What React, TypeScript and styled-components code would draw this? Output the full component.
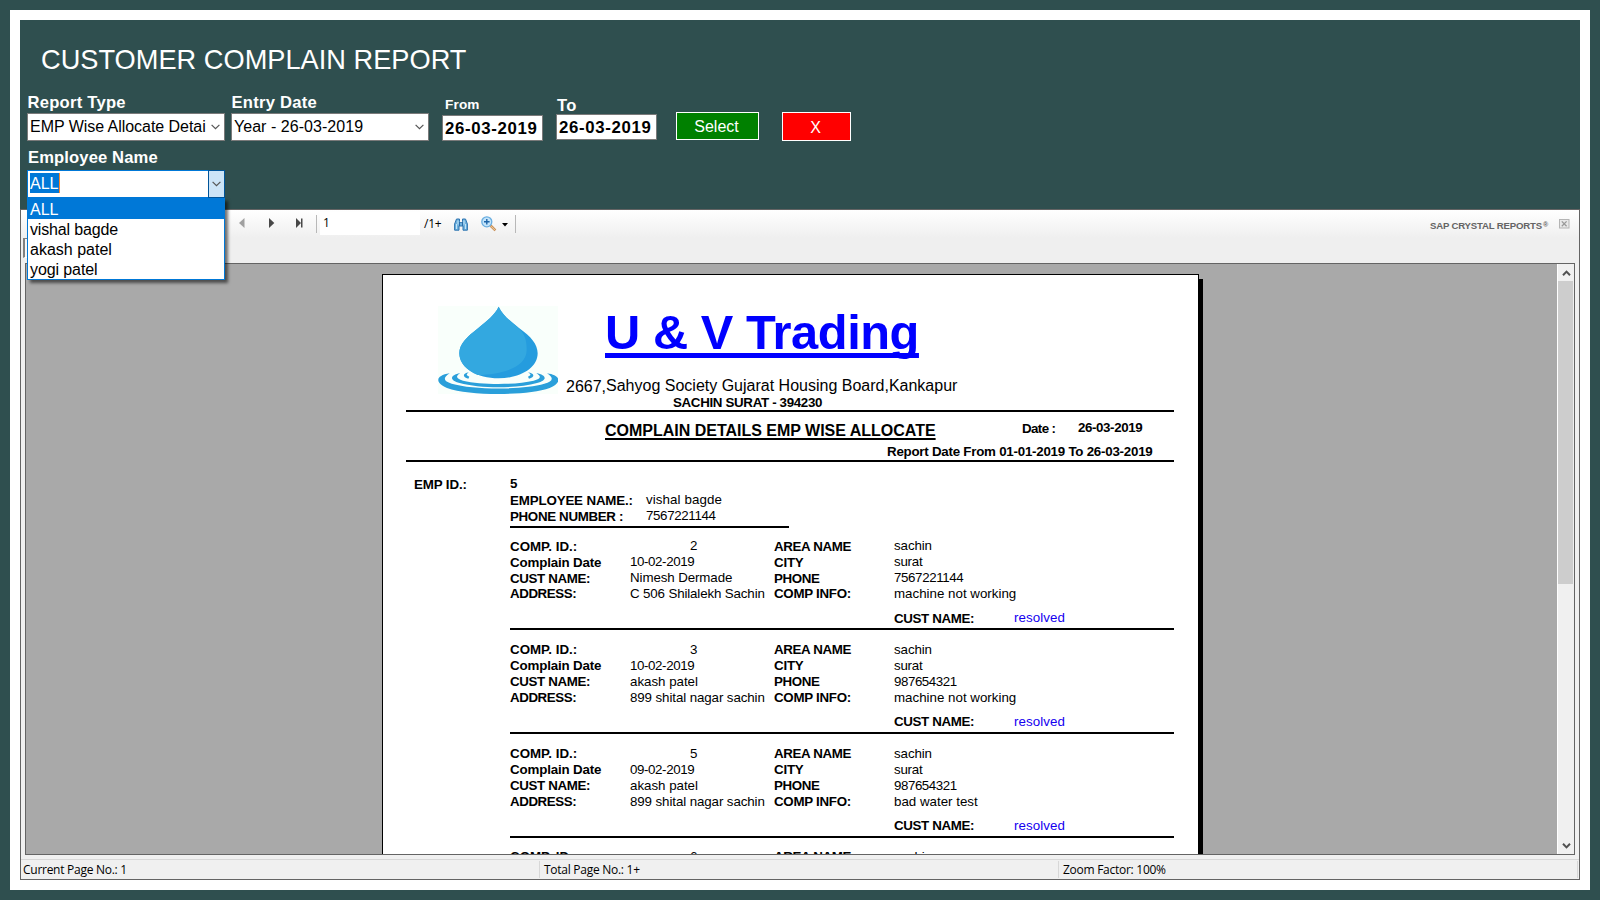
import React from 'react';
import styled, { createGlobalStyle } from 'styled-components';

const TEAL = '#2f4f4f';
const BLUE = '#0078d7';
const EDGE = '#646464';

const GlobalStyle = createGlobalStyle`
  * { box-sizing: border-box; }
  body {
    margin: 0;
    overflow: hidden;
    font-family: 'Liberation Sans', Arial, sans-serif;
    font-size: 16px;
    color: #000;
  }
`;

type Spaced = { $ls?: number };

/* ---------- window ---------- */

const Window = styled.div`
  width: 1600px;
  height: 900px;
  padding: 10px;
  background: ${TEAL};
`;

const Frame = styled.div`
  display: flex;
  flex-direction: column;
  height: 880px;
  padding: 10px;
  background: #fff;
`;

const Header = styled.header`
  flex: 0 0 189px;
  padding: 25px 0 0 7px;
  background: ${TEAL};
  color: #fff;
`;

const Title = styled.h1`
  margin: 0 0 18px 14px;
  font-size: 27.2px;
  font-weight: 400;
  line-height: 30px;
  letter-spacing: 0.02px;
`;

const Filters = styled.div`
  display: flex;
  align-items: flex-start;
  height: 48px;
`;

const Field = styled.div<{ $width: number; $drop?: number; $gap?: number }>`
  display: flex;
  flex-direction: column;
  flex: none;
  width: ${(p) => p.$width}px;
  padding-top: ${(p) => p.$drop ?? 0}px;
  margin-right: ${(p) => p.$gap ?? 0}px;
`;

const FieldLabel = styled.label<Spaced & { $height?: number; $inset?: number }>`
  display: block;
  height: ${(p) => p.$height ?? 20}px;
  padding-left: ${(p) => p.$inset ?? 0.5}px;
  font-size: 16.6px;
  font-weight: 700;
  line-height: 20px;
  letter-spacing: ${(p) => p.$ls ?? 0.25}px;
`;

const SmallLabel = styled(FieldLabel)`
  height: 18px;
  padding-left: 3px;
  font-size: 13.6px;
  line-height: 16px;
`;

const SelectBox = styled.div<Spaced>`
  display: flex;
  align-items: center;
  justify-content: space-between;
  height: 28px;
  padding: 0 4px 0 2px;
  border: 1px solid #7a7a7a;
  background: #fff;
  color: #000;
  line-height: 18px;
  letter-spacing: ${(p) => p.$ls ?? 0}px;
  white-space: nowrap;
`;

const DateBox = styled.div`
  height: 26px;
  padding: 4px 0 0 2px;
  border: 1px solid #7a7a7a;
  background: #fff;
  color: #000;
  font-size: 16.8px;
  font-weight: 700;
  line-height: 18px;
  letter-spacing: 0.66px;
`;

const ActionButton = styled.button<{ $color: string; $width: number; $height: number }>`
  width: ${(p) => p.$width}px;
  height: ${(p) => p.$height}px;
  margin: 19px 23px 0 0;
  padding: 2px 2px 0 0;
  border: 1px solid #fff;
  background: ${(p) => p.$color};
  color: #fff;
  font: 16px/18px 'Liberation Sans', Arial, sans-serif;
`;

const EmployeeField = styled.div`
  width: 198px;
  margin-top: 7px;
`;

const Combo = styled.div`
  position: relative;
  display: flex;
  height: 28px;
  margin-top: 2px;
  border: 1px solid ${BLUE};
  background: #fff;
`;

const ComboText = styled.div`
  flex: 1;
  padding: 2px 0 0 2px;
`;

const Selection = styled.div`
  width: 30px;
  height: 20px;
  background: ${BLUE};
  border-right: 1px solid #ff8728;
  line-height: 21px;
`;

const ComboButton = styled.div`
  display: grid;
  place-items: center;
  width: 17px;
  margin: -1px -1px -1px 0;
  border: 1px solid #005499;
  background: #cce4f7;
`;

const Options = styled.ul`
  position: absolute;
  z-index: 5;
  top: 27px;
  left: -1px;
  width: 198px;
  margin: 0;
  padding: 0;
  list-style: none;
  border: 1px solid ${BLUE};
  border-top: 0;
  background: #fff;
  box-shadow: 3px 3px 3px rgba(0, 0, 0, 0.55);
`;

const Option = styled.li<Spaced & { $active?: boolean }>`
  height: ${(p) => (p.$active ? 21 : 20)}px;
  padding: ${(p) => (p.$active ? 1 : 0)}px 0 0 2px;
  background: ${(p) => (p.$active ? BLUE : 'transparent')};
  color: ${(p) => (p.$active ? '#fff' : '#000')};
  line-height: 22px;
  letter-spacing: ${(p) => p.$ls ?? 0}px;
`;

/* ---------- viewer ---------- */

const Viewer = styled.main`
  flex: 1;
  display: flex;
  flex-direction: column;
  border: 1px solid ${EDGE};
  background: #f0f0f0;
`;

const Toolbar = styled.div`
  position: relative;
  display: flex;
  align-items: flex-start;
  height: 53px;
  padding-left: 217px;
  background: linear-gradient(#fff, #efefef 28px);
`;

const TabEdge = styled.div`
  position: absolute;
  top: 28px;
  left: 2px;
  width: 8px;
  height: 20px;
  border: 1px solid #808080;
  border-width: 1px 0 1px 2px;
  border-bottom-color: #fff;
  background: #f7f7f7;
`;

const Glyph = styled.svg<{ $left: number; $top: number }>`
  flex: none;
  display: block;
  margin: ${(p) => p.$top}px 0 0 ${(p) => p.$left}px;
`;

const Divider = styled.div<{ $left: number }>`
  width: 1px;
  height: 18px;
  margin: 5px 0 0 ${(p) => p.$left}px;
  background: #b8b8b8;
`;

const PageInput = styled.div`
  width: 100px;
  height: 23px;
  margin: 2px 0 0 3px;
  padding: 2px 0 0 3px;
  background: #fff;
  font: 12px/18px 'Open Sans', sans-serif;
`;

const PageCount = styled.div`
  width: 30px;
  margin: 5px 0 0 4px;
  font: 12px/18px 'Open Sans', sans-serif;
  letter-spacing: -0.2px;
`;

const Brand = styled.div`
  display: flex;
  margin: 10px 11px 0 auto;
  color: ${EDGE};
  font-size: 9.6px;
  font-weight: 700;
  line-height: 11px;
  letter-spacing: -0.17px;
`;

const Registered = styled.span`
  font-size: 7px;
  line-height: 9px;
  padding-left: 1px;
`;

const Panel = styled.div`
  display: flex;
  height: 592px;
  margin: 0 4px;
  border: 1px solid ${EDGE};
`;

const Canvas = styled.div`
  flex: 1;
  overflow: hidden;
  padding: 10px 0 0 356px;
  background: #a9a9a9;
`;

const Scrollbar = styled.div`
  display: flex;
  flex-direction: column;
  align-items: center;
  justify-content: space-between;
  width: 17px;
  padding: 6px 0 5px;
  border-left: 1px solid #fff;
  background: #f0f0f0;
`;

const Thumb = styled.div`
  width: 15px;
  height: 303px;
  margin: 5px 1px auto 0;
  background: #cdcdcd;
`;

const StatusBar = styled.footer`
  display: flex;
  height: 20px;
  margin-top: 4px;
  padding-top: 1px;
  border-top: 1px solid #d7d7d7;
`;

const StatusCell = styled.div<{ $width: number; $ls: number; $inset: number }>`
  width: ${(p) => p.$width}px;
  height: 17px;
  padding-left: ${(p) => p.$inset}px;
  border-right: 1px solid #d7d7d7;
  font: 12px/18px 'Open Sans', sans-serif;
  letter-spacing: ${(p) => p.$ls}px;
`;

/* ---------- report page ---------- */

const Sheet = styled.article`
  width: 817px;
  height: 700px;
  padding: 31px 24px 0 23px;
  border: 1px solid #000;
  background: #fff;
  box-shadow: 4px 5px 0 #000;
  font-size: 13.33px;
  line-height: 16px;
  white-space: nowrap;
`;

const Rule = styled.div<{ $width?: number }>`
  width: ${(p) => (p.$width ? `${p.$width}px` : 'auto')};
  height: 2px;
  background: #000;
`;

const Letterhead = styled.div`
  display: flex;
  height: 104px;
  padding-left: 32px;
`;

const Company = styled.div`
  margin-left: 8px;
`;

const CompanyName = styled.h2`
  margin: 0 0 19px 39px;
  color: #00f;
  font-size: 48.8px;
  font-weight: 700;
  line-height: 52px;
  letter-spacing: -0.46px;
  text-decoration: underline 5px;
  text-underline-offset: 4px;
  text-decoration-skip-ink: none;
`;

const Address = styled.p`
  height: 18px;
  margin: 0;
  font-size: 16px;
  line-height: 18px;
`;

const HouseNo = styled.span`
  display: inline-block;
  height: 18px;
  vertical-align: -1px;
`;

const Text = styled.div<Spaced & { $bold?: boolean; $width?: number; $left?: number; $top?: number; $color?: string }>`
  flex: none;
  width: ${(p) => (p.$width ? `${p.$width}px` : 'auto')};
  padding: ${(p) => p.$top ?? 0}px 0 0 ${(p) => p.$left ?? 0}px;
  color: ${(p) => p.$color ?? '#000'};
  font-weight: ${(p) => (p.$bold ? 700 : 400)};
  letter-spacing: ${(p) => p.$ls ?? 0}px;
`;

const HeadingRow = styled.div`
  display: flex;
  height: 32px;
  padding-left: 199px;
`;

const Heading = styled.h3`
  width: 417px;
  margin: 10px 0 0;
  font-size: 16px;
  line-height: 18px;
  letter-spacing: -0.01px;
  text-decoration: underline 2px;
  text-underline-offset: 2px;
  text-decoration-skip-ink: none;
`;

const Employee = styled.section`
  display: grid;
  grid-template-columns: 96px 136px 1fr;
  grid-auto-rows: 16px;
  height: 64px;
  padding: 14px 0 0 8px;
`;

const Records = styled.div`
  padding-left: 104px;
`;

const Record = styled.section<{ $lift?: number }>`
  display: flex;
  flex-direction: column;
  justify-content: space-between;
  height: 104px;
  padding-top: ${(p) => 12 - (p.$lift ?? 0)}px;

  &:first-of-type {
    margin-top: -2px;
  }
`;

const Grid = styled.div`
  display: grid;
  grid-template-columns: 120px 144px 120px 120px;
  grid-auto-rows: 16px;
`;

const Resolution = styled.div`
  display: grid;
  grid-template-columns: 120px 1fr;
  height: 18px;
  margin: 8px 0 0 384px;
`;

type Pair = [string, number];
type Rec = { id: string; date: Pair; name: Pair; address: Pair; phone: Pair; info: Pair };

const records: Rec[] = [
  { id: '2', date: ['10-02-2019', -0.4], name: ['Nimesh Dermade', -0.1], address: ['C 506 Shilalekh Sachin', -0.14], phone: ['7567221144', -0.38], info: ['machine not working', 0] },
  { id: '3', date: ['10-02-2019', -0.4], name: ['akash patel', -0.02], address: ['899 shital nagar sachin', -0.1], phone: ['987654321', -0.45], info: ['machine not working', 0] },
  { id: '5', date: ['09-02-2019', -0.4], name: ['akash patel', -0.02], address: ['899 shital nagar sachin', -0.1], phone: ['987654321', -0.45], info: ['bad water test', 0] },
];

function RecordHead({ id, drop = 0 }: { id: string; drop?: number }) {
  return (
    <>
      <Text $bold $top={drop} $ls={0}>COMP. ID.:</Text>
      <Text $left={60}>{id}</Text>
      <Text $bold $top={drop} $ls={-0.35}>AREA NAME</Text>
      <Text $ls={-0.1}>sachin</Text>
    </>
  );
}

function RecordBlock({ rec, drop }: { rec: Rec; drop: number }) {
  return (
    <Record>
      <div>
        <Grid>
          <RecordHead id={rec.id} drop={drop} />
          <Text $bold $top={drop} $ls={-0.15}>Complain Date</Text>
          <Text $ls={rec.date[1]}>{rec.date[0]}</Text>
          <Text $bold $top={drop} $ls={-0.2}>CITY</Text>
          <Text $ls={-0.25}>surat</Text>
          <Text $bold $top={drop} $ls={-0.35}>CUST NAME:</Text>
          <Text $ls={rec.name[1]}>{rec.name[0]}</Text>
          <Text $bold $top={drop} $ls={-0.4}>PHONE</Text>
          <Text $ls={rec.phone[1]}>{rec.phone[0]}</Text>
          <Text $bold $ls={-0.42}>ADDRESS:</Text>
          <Text $ls={rec.address[1]}>{rec.address[0]}</Text>
          <Text $bold $ls={-0.28}>COMP INFO:</Text>
          <Text $ls={rec.info[1]}>{rec.info[0]}</Text>
        </Grid>
        <Resolution>
          <Text $bold $top={drop} $ls={-0.35}>CUST NAME:</Text>
          <Text $color="#1400f0" $ls={0.08}>resolved</Text>
        </Resolution>
      </div>
      <Rule />
    </Record>
  );
}

const Chevron = () => (
  <svg width="9" height="6" viewBox="0 0 9 6">
    <path d="M0.6 0.8 L4.5 4.7 L8.4 0.8" fill="none" stroke="#555" strokeWidth="1.2" />
  </svg>
);

const WaterDrop = () => (
  <svg width="120" height="88" viewBox="25 18 360 264" preserveAspectRatio="none">
    <rect x="25" y="18" width="360" height="264" fill="#f9fffb" />
    <g fill="#2a9fda">
      <path d="M60 220C18 226 14 248 52 264C120 288 292 288 360 264C398 248 394 226 352 220C374 234 370 244 344 251C280 270 132 270 66 251C42 244 38 234 60 220Z" />
      <path d="M92 219C60 226 58 240 90 249C150 266 262 266 322 249C354 240 352 226 320 219C336 230 334 236 312 242C256 255 156 255 100 242C80 236 76 230 92 219Z" />
      <path d="M118 217C98 220 98 232 116 236L119 230C108 226 110 222 118 217Z" />
      <path d="M294 217C316 220 316 232 298 236L295 230C306 226 304 222 294 217Z" />
    </g>
    <path d="M207 20C196 44 170 64 146 84C110 112 89 132 89 160C89 204 142 235 207 235C272 235 324 204 324 160C324 132 304 110 268 84C242 64 218 44 207 20Z" fill="#259cde" />
    <path d="M207 20C196 44 170 64 146 84C110 112 89 132 89 160C89 190 112 212 144 225C222 224 291 200 291 150C291 120 286 100 262 80C240 62 218 44 207 20Z" fill="#33a8e0" />
  </svg>
);

export default function App() {
  return (
    <Window>
      <GlobalStyle />
      <Frame>
        <Header>
          <Title>CUSTOMER COMPLAIN REPORT</Title>
          <Filters>
            <Field $width={198} $gap={6}>
              <FieldLabel>Report Type</FieldLabel>
              <SelectBox $ls={-0.04}>EMP Wise Allocate Detai<Chevron /></SelectBox>
            </Field>
            <Field $width={198} $gap={13}>
              <FieldLabel>Entry Date</FieldLabel>
              <SelectBox $ls={0.04}>Year - 26-03-2019<Chevron /></SelectBox>
            </Field>
            <Field $width={101} $gap={13} $drop={4}>
              <SmallLabel $ls={0.15}>From</SmallLabel>
              <DateBox>26-03-2019</DateBox>
            </Field>
            <Field $width={101} $gap={19} $drop={3}>
              <FieldLabel $height={18} $inset={1}>To</FieldLabel>
              <DateBox>26-03-2019</DateBox>
            </Field>
            <ActionButton $color="#008000" $width={83} $height={28}>Select</ActionButton>
            <ActionButton $color="#ff0000" $width={69} $height={29}>X</ActionButton>
          </Filters>
          <EmployeeField>
            <FieldLabel $ls={0.12} $inset={1}>Employee Name</FieldLabel>
            <Combo>
              <ComboText>
                <Selection>ALL</Selection>
              </ComboText>
              <ComboButton><Chevron /></ComboButton>
              <Options>
                <Option $active>ALL</Option>
                <Option $ls={-0.15}>vishal bagde</Option>
                <Option>akash patel</Option>
                <Option $ls={-0.1}>yogi patel</Option>
              </Options>
            </Combo>
          </EmployeeField>
        </Header>

        <Viewer>
          <Toolbar>
            <TabEdge />
            <Glyph $left={1} $top={8} width="6" height="10" viewBox="0 0 6 10"><path d="M5.5 0V10L0 5Z" fill="#a0a0a0" /></Glyph>
            <Glyph $left={24} $top={8} width="6" height="10" viewBox="0 0 6 10"><path d="M0 0V10L5.3 5Z" fill="#484848" /></Glyph>
            <Glyph $left={21} $top={8} width="7" height="10" viewBox="0 0 7 10"><path d="M0 0V10L5 5Z" fill="#484848" /><path d="M5 0.5H6.5V9.5H5Z" fill="#484848" /></Glyph>
            <Divider $left={13} />
            <PageInput>1</PageInput>
            <PageCount>/1+</PageCount>
            <Glyph $left={0} $top={8} width="14" height="13" viewBox="0 0 14 13">
              <path d="M2.5 1H5.5V3.5L6.3 4.5H7.7L8.5 3.5V1H11.5L13.4 6V12.2H9V8H5V12.2H0.6V6Z" fill="#6fb2de" stroke="#2f74b0" strokeWidth="1" />
              <path d="M2.5 6V11M4 2.5V6.5M10 2.5V6.5M11.5 6V11" stroke="#c4e4f8" strokeWidth="1" />
              <path d="M5.5 4V8M8.5 4V8" stroke="#2b6ca8" />
            </Glyph>
            <Glyph $left={13} $top={6} width="16" height="16" viewBox="0 0 16 16">
              <path d="M9.5 9.5L14.4 14.4" stroke="#c9925a" strokeWidth="2.6" />
              <path d="M10 10.2L13.8 14" stroke="#f6cf9e" strokeWidth="1" />
              <circle cx="5.8" cy="5.8" r="5" fill="#c5e5fb" stroke="#6aaee0" strokeWidth="1.3" />
              <path d="M3 5.8H8.6M5.8 3V8.6" stroke="#1d64a8" strokeWidth="1.4" />
            </Glyph>
            <Glyph $left={5} $top={13} width="6" height="4" viewBox="0 0 6 4"><path d="M0 0H6L3 3.4Z" fill="#000" /></Glyph>
            <Divider $left={7} />
            <Brand>SAP CRYSTAL REPORTS<Registered>®</Registered></Brand>
            <Glyph $left={0} $top={9} width="20" height="10" viewBox="0 0 20 10">
              <rect x="0.5" y="0.5" width="9.5" height="8.5" fill="#e8e8e8" stroke="#b4b4b4" />
              <path d="M2.8 2.4L7.6 7.2M7.6 2.4L2.8 7.2" stroke="#999" strokeWidth="1.3" />
            </Glyph>
          </Toolbar>

          <Panel>
            <Canvas>
              <Sheet>
                <Letterhead>
                  <WaterDrop />
                  <Company>
                    <CompanyName>U &amp; V Trading</CompanyName>
                    <Address><HouseNo>2667,</HouseNo>Sahyog Society Gujarat Housing Board,Kankapur</Address>
                    <Text $bold $left={107} $ls={-0.33}>SACHIN SURAT - 394230</Text>
                  </Company>
                </Letterhead>
                <Rule />
                <HeadingRow>
                  <Heading>COMPLAIN DETAILS EMP WISE ALLOCATE</Heading>
                  <Text $bold $width={56} $top={9} $ls={-0.6}>Date :</Text>
                  <Text $bold $top={8} $ls={-0.4}>26-03-2019</Text>
                </HeadingRow>
                <Text $bold $left={481} $ls={-0.24}>Report Date From 01-01-2019 To 26-03-2019</Text>
                <Rule />
                <Employee>
                  <Text $bold $top={1} $ls={-0.12}>EMP ID.:</Text>
                  <Text $bold>5</Text>
                  <Text />
                  <Text />
                  <Text $bold $top={1} $ls={-0.15}>EMPLOYEE NAME.:</Text>
                  <Text $ls={0.1}>vishal bagde</Text>
                  <Text />
                  <Text $bold $top={1} $ls={-0.33}>PHONE NUMBER :</Text>
                  <Text $ls={-0.35}>7567221144</Text>
                </Employee>
                <Records>
                  <Rule $width={279} />
                  {records.map((rec, i) => (
                    <RecordBlock key={rec.id} rec={rec} drop={i === 0 ? 1 : 0} />
                  ))}
                  <Record $lift={1}>
                    <Grid>
                      <RecordHead id="6" />
                    </Grid>
                  </Record>
                </Records>
              </Sheet>
            </Canvas>
            <Scrollbar>
              <svg width="9" height="6" viewBox="0 0 9 6"><path d="M1 5.2L4.5 1.6L8 5.2" fill="none" stroke="#505050" strokeWidth="2" /></svg>
              <Thumb />
              <svg width="9" height="6" viewBox="0 0 9 6"><path d="M1 0.8L4.5 4.4L8 0.8" fill="none" stroke="#505050" strokeWidth="2" /></svg>
            </Scrollbar>
          </Panel>

          <StatusBar>
            <StatusCell $width={519} $inset={2} $ls={-0.27}>Current Page No.: 1</StatusCell>
            <StatusCell $width={519} $inset={4} $ls={-0.27}>Total Page No.: 1+</StatusCell>
            <StatusCell $width={519} $inset={4} $ls={-0.27}>Zoom Factor: 100%</StatusCell>
          </StatusBar>
        </Viewer>
      </Frame>
    </Window>
  );
}
